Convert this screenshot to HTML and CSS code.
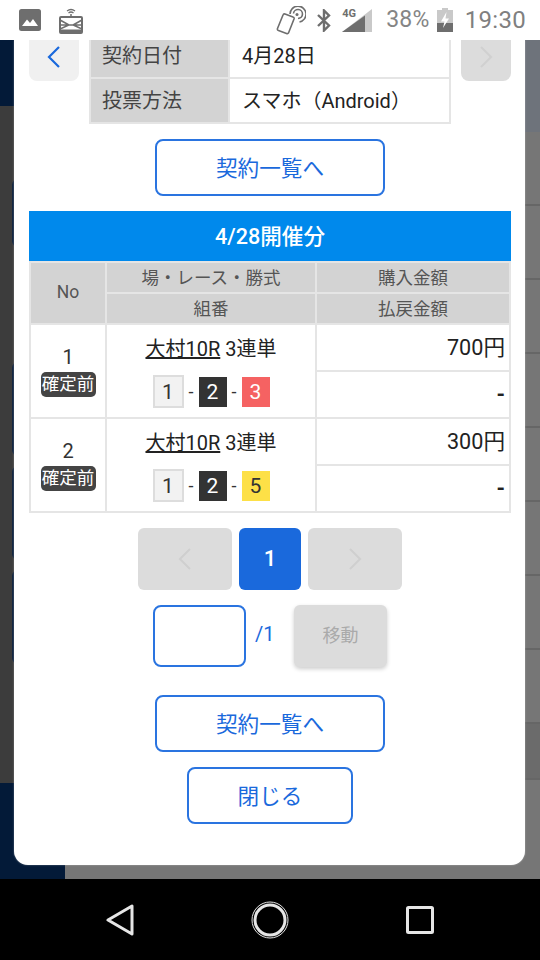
FILE: index.html
```html
<!DOCTYPE html>
<html lang="ja">
<head>
    <meta charset="UTF-8">
    <meta name="viewport" content="width=device-width, initial-scale=1.0">
    <title>投票内容</title>
    <link rel="stylesheet" href="styles.css">
</head>
<body>
    <div class="statusBar">
        <svg class="iconPicture" width="22" height="22" viewBox="0 0 22 22">
            <rect width="22" height="22" rx="2.5" fill="#6e6e6e"/>
            <path d="M3 17 L8 10.5 L11 14 L14 10 L19 17 Z" fill="#fff"/>
        </svg>
        <svg class="iconRoad" width="24" height="27" viewBox="0 0 24 27" fill="none" stroke="#6e6e6e">
            <path d="M8 4 Q12 1 16 4 M9.5 6 Q12 4 14.500 6" stroke-width="1.300"/>
            <circle cx="12" cy="8" r="1" fill="#6e6e6e" stroke="none"/>
            <rect x="1" y="10" width="22" height="16" rx="1" stroke-width="2"/>
            <path d="M1 13 L10 18 L1 22 M23 13 L14 18 L23 22 M2 18 H22" stroke-width="1.500"/>
            <path d="M1 24 H23" stroke-width="3"/>
        </svg>
        <div class="statusRight">
            <svg class="iconNfc" width="30" height="29" viewBox="0 0 30 29" fill="none" stroke="#6e6e6e" stroke-width="1.600">
                <path d="M9 8 L17 11 Q18.500 11.500 18 13 L12.500 27 Q12 28 10.500 27.500 L2.500 24.500 Q1 24 1.500 22.500 L7 9 Q7.500 7.500 9 8 Z"/>
                <path d="M14 8 A8 8 0 1 1 23.500 16"/>
                <path d="M17.500 7.500 A4.500 4.500 0 1 1 22 12.500"/>
                <circle cx="21" cy="8.500" r="1.500" fill="#6e6e6e" stroke="none"/>
            </svg>
            <svg class="iconBluetooth" width="14" height="23" viewBox="0 0 14 23" fill="none" stroke="#6e6e6e" stroke-width="2.400">
                <path d="M1 6 L12 16.500 L7 21.500 V1.500 L12 6.500 L1 17"/>
            </svg>
            <div class="signal">
                <svg width="30" height="23" viewBox="0 0 30 23">
                    <path d="M30 0 V23 H0 Z" fill="#c9c9c9"/>
                    <path d="M23 6.500 V23 H0 L23 6.500 Z" fill="#6e6e6e"/>
                </svg>
                <span class="signalLabel">4G</span>
            </div>
            <span class="battery">38%</span>
            <svg class="iconBattery" width="16" height="24" viewBox="0 0 16 24">
                <path d="M5 0 H11 V2 H16 V24 H0 V2 H5 Z" fill="#c9c9c9"/>
                <path d="M0 15 H16 V24 H0 Z" fill="#6e6e6e"/>
                <path d="M9.500 4 L4 13.500 H7.500 L6 20 L12 10.500 H8.500 Z" fill="#fff"/>
            </svg>
            <span class="clock">19:30</span>
        </div>
    </div>

    <div class="main">
        <div class="behind">
            <div class="behindLeft">
                <div class="navyBand"></div>
                <div class="darkBand">
                    <div class="behindBox boxA"></div>
                    <div class="behindBox boxB"></div>
                    <div class="behindBox boxC"></div>
                    <div class="behindBox boxD"></div>
                </div>
                <div class="navyBand bottomBand"></div>
            </div>
            <div class="behindRight">
                <div class="blueGrayBand"></div>
                <div class="listRow"></div>
                <div class="listRow"></div>
                <div class="listRow"></div>
                <div class="listRow"></div>
                <div class="listRow"></div>
                <div class="listRow"></div>
                <div class="listRow"></div>
                <div class="listRow"></div>
                <div class="listRow shortRow"></div>
            </div>
        </div>

        <div class="modal">
            <div class="contract">
                <div class="arrowBtn prevBtn">
                    <svg width="14" height="22" viewBox="0 0 14 22" fill="none" stroke="#1a69dc" stroke-width="2.200"><path d="M12 1 L2 11 L12 21"/></svg>
                </div>
                <table class="contractTable">
                    <tr><th>契約日付</th><td>4月28日</td></tr>
                    <tr><th>投票方法</th><td>スマホ（Android）</td></tr>
                </table>
                <div class="arrowBtn nextBtn">
                    <svg width="14" height="22" viewBox="0 0 14 22" fill="none" stroke="#d0d0d0" stroke-width="2"><path d="M2 1 L12 11 L2 21"/></svg>
                </div>
            </div>

            <a class="outlineBtn listBtn firstList">契約一覧へ</a>

            <div class="dayTitle">4/28開催分</div>
            <table class="betTable">
                <colgroup><col class="colNo"><col class="colRace"><col class="colAmount"></colgroup>
                <tr class="headRow">
                    <th rowspan="2">No</th>
                    <th>場・レース・勝式</th>
                    <th>購入金額</th>
                </tr>
                <tr class="headRow">
                    <th>組番</th>
                    <th>払戻金額</th>
                </tr>
                <tr class="amountRow">
                    <td rowspan="2" class="noCell">
                        <div class="betNo">1</div>
                        <span class="statusTag">確定前</span>
                    </td>
                    <td rowspan="2" class="raceCell">
                        <div class="raceName"><span class="raceLink">大村10R</span> 3連単</div>
                        <div class="combo">
                            <span class="boat boat1">1</span><span class="dash">-</span><span class="boat boat2">2</span><span class="dash">-</span><span class="boat boat3">3</span>
                        </div>
                    </td>
                    <td class="amount">700円</td>
                </tr>
                <tr class="amountRow">
                    <td class="amount refund">-</td>
                </tr>
                <tr class="amountRow">
                    <td rowspan="2" class="noCell">
                        <div class="betNo">2</div>
                        <span class="statusTag">確定前</span>
                    </td>
                    <td rowspan="2" class="raceCell">
                        <div class="raceName"><span class="raceLink">大村10R</span> 3連単</div>
                        <div class="combo">
                            <span class="boat boat1">1</span><span class="dash">-</span><span class="boat boat2">2</span><span class="dash">-</span><span class="boat boat5">5</span>
                        </div>
                    </td>
                    <td class="amount">300円</td>
                </tr>
                <tr class="amountRow">
                    <td class="amount refund">-</td>
                </tr>
            </table>

            <div class="pager">
                <div class="pageArrow">
                    <svg width="14" height="22" viewBox="0 0 14 22" fill="none" stroke="#cfcfcf" stroke-width="2"><path d="M12 1 L2 11 L12 21"/></svg>
                </div>
                <div class="pageNow">1</div>
                <div class="pageArrow">
                    <svg width="14" height="22" viewBox="0 0 14 22" fill="none" stroke="#cfcfcf" stroke-width="2"><path d="M2 1 L12 11 L2 21"/></svg>
                </div>
            </div>

            <div class="jump">
                <input class="jumpInput" type="text">
                <span class="jumpTotal">/1</span>
                <div class="jumpBtn">移動</div>
            </div>

            <a class="outlineBtn listBtn secondList">契約一覧へ</a>
            <a class="outlineBtn closeBtn">閉じる</a>
        </div>
    </div>

    <div class="navBar">
        <svg width="28" height="32" viewBox="0 0 28 32" fill="none" stroke="#e6e6e6" stroke-width="3" stroke-linejoin="round"><path d="M26 2 V30 L2 16 Z"/></svg>
        <svg width="38" height="38" viewBox="0 0 38 38" fill="none" stroke="#e6e6e6"><circle cx="19" cy="19" r="18" stroke-width="1"/><circle cx="19" cy="19" r="15" stroke-width="3"/></svg>
        <svg width="28" height="28" viewBox="0 0 28 28" fill="none" stroke="#e6e6e6" stroke-width="3" stroke-linejoin="round"><rect x="1.500" y="1.500" width="25" height="25" rx="1"/></svg>
    </div>
</body>
</html>
```

FILE: styles.css
```css
* {
    box-sizing: border-box;
}
html,body {
    height: 100%;
}
body {
    margin: 0;
    display: flex;
    flex-flow: column;
    width: 540px;
    height: 960px;
    overflow: hidden;
    font-family: "Roboto", "Noto Sans CJK JP", sans-serif;
    color: #333;
}

/* status bar */
.statusBar {
    height: 40px;
    flex: none;
    display: flex;
    align-items: center;
    padding: 0 14px 0 19px;
    background: #fff;
}
.iconRoad {
    margin-left: 18px;
    margin-top: 1px;
}
.statusRight {
    margin-left: auto;
    display: flex;
    align-items: center;
}
.iconNfc {
    margin-right: 11px;
}
.iconBluetooth {
    margin-right: 11px;
}
.signal {
    position: relative;
    width: 30px;
    height: 23px;
    margin-right: 14px;
}
.signal svg {
    display: block;
}
.signalLabel {
    position: absolute;
    left: 0;
    top: -2px;
    font: bold 11px/14px "Roboto", sans-serif;
    color: #6e6e6e;
}
.battery {
    font: 23px/24px "Roboto", sans-serif;
    color: #858585;
    letter-spacing: 0.3px;
    margin-right: 7px;
}
.iconBattery {
    margin-right: 12px;
}
.clock {
    font: 24px/24px "Roboto", sans-serif;
    color: #808080;
    letter-spacing: 0.3px;
}

/* page behind the dialog */
.main {
    flex: 1;
    position: relative;
    overflow: hidden;
}
.behind {
    height: 100%;
    display: flex;
}
.behindLeft {
    width: 65px;
    display: flex;
    flex-flow: column;
}
.navyBand {
    height: 66px;
    background: #031a38;
}
.bottomBand {
    height: 96px;
}
.darkBand {
    flex: 1;
    background: #3c3c3c;
    padding-left: 12px;
}
.behindBox {
    height: 94px;
    border: 2px solid #10233f;
    border-radius: 6px;
}
.boxA {
    margin-top: 73px;
    height: 68px;
}
.boxB {
    margin-top: 115px;
}
.boxC {
    margin-top: 10px;
}
.boxD {
    margin-top: 10px;
}
.behindRight {
    flex: 1;
    background: #767676;
}
.blueGrayBand {
    height: 92px;
    background: #6e737b;
}
.listRow {
    height: 74px;
    border-bottom: 2px solid #666;
}
.shortRow {
    background: #6b6b6b;
    height: 56px;
}

/* dialog */
.modal {
    position: absolute;
    left: 14px;
    top: 0;
    width: 511px;
    height: 825px;
    padding: 0 14px 0 15px;
    background: #fff;
    border-radius: 0 0 14px 14px;
    overflow: hidden;
    box-shadow: 0 0 2px rgba(255,255,255,0.4);
}
.contract {
    display: flex;
    align-items: flex-start;
    margin-top: -8px;
}
.arrowBtn {
    width: 50px;
    height: 49px;
    flex: none;
    display: flex;
    justify-content: center;
    align-items: center;
    border-radius: 0 0 8px 8px;
}
.prevBtn {
    background: #f0f0f0;
}
.nextBtn {
    background: #dcdcdc;
}
.contractTable {
    width: 362px;
    height: 90px;
    margin: 0 10px;
    border-collapse: collapse;
    table-layout: fixed;
    font-size: 20px;
}
.contractTable th,.contractTable td {
    height: 45px;
    border: 2px solid #e5e5e5;
    font-weight: normal;
    text-align: left;
    padding: 0 11px 2px;
}
.contractTable th {
    width: 139px;
    background: #d3d3d3;
    color: #444;
}
.contractTable td {
    padding-left: 12px;
    color: #222;
}
.outlineBtn {
    display: flex;
    justify-content: center;
    align-items: center;
    height: 57px;
    margin: 0 auto;
    padding-bottom: 3px;
    border: 2px solid #2a74e0;
    border-radius: 8px;
    font-size: 21.600px;
    color: #1a69dc;
}
.listBtn {
    width: 230px;
}
.firstList {
    margin-top: 15px;
}
.dayTitle {
    margin-top: 15px;
    height: 50px;
    padding-bottom: 4px;
    display: flex;
    justify-content: center;
    align-items: center;
    background: #0089ec;
    color: #fff;
    font-size: 21.600px;
    font-weight: 500;
}

/* bets */
.betTable {
    width: 482px;
    border-collapse: collapse;
    table-layout: fixed;
    border: 2px solid #e5e5e5;
}
.colNo {
    width: 76px;
}
.colRace {
    width: 210px;
}
.betTable th,.betTable td {
    border: 2px solid #e5e5e5;
    padding: 0;
}
.betTable th {
    height: 31px;
    padding-bottom: 3px;
    background: #d3d3d3;
    font-size: 17.500px;
    font-weight: normal;
    color: #555;
}
.amountRow td {
    height: 47px;
}
.noCell {
    text-align: center;
    vertical-align: middle;
}
.betNo {
    font-size: 20px;
    line-height: 24px;
    margin-bottom: 3px;
}
.statusTag {
    display: inline-block;
    width: 55px;
    height: 25px;
    line-height: 24px;
    border-radius: 5px;
    background: #444;
    color: #fff;
    font-size: 17.500px;
    vertical-align: top;
}
.raceCell {
    text-align: center;
    vertical-align: top;
}
.raceName {
    font-size: 20px;
    line-height: 28px;
    margin-top: 10px;
    color: #222;
}
.raceLink {
    text-decoration: underline;
}
.combo {
    display: flex;
    justify-content: center;
    align-items: center;
    margin-top: 12px;
}
.boat {
    width: 28px;
    height: 30px;
    display: flex;
    justify-content: center;
    align-items: center;
    font-size: 21px;
}
.boat1 {
    width: 31px;
    height: 33px;
    background: #f2f2f2;
    border: 2px solid #ddd;
}
.boat2 {
    background: #333;
    color: #fff;
}
.boat3 {
    background: #f56262;
    color: #fff;
}
.boat5 {
    background: #fde047;
}
.dash {
    width: 15px;
    text-align: center;
    font-size: 18px;
}
.amount {
    text-align: right;
    font-size: 21.600px;
    color: #222;
}
.betTable td.amount {
    padding: 0 4px 4px 0;
}
.betTable td.refund {
    padding-bottom: 0;
    font-weight: bold;
}

/* pager */
.pager {
    display: flex;
    justify-content: center;
    gap: 7px;
    margin-top: 15px;
}
.pageArrow,.pageNow {
    height: 62px;
    display: flex;
    justify-content: center;
    align-items: center;
    border-radius: 6px;
}
.pageArrow {
    width: 94px;
    background: #dcdcdc;
}
.pageNow {
    width: 62px;
    padding-bottom: 2px;
    background: #1a69dc;
    color: #fff;
    font-size: 22px;
    font-weight: 500;
}
.jump {
    display: flex;
    align-items: center;
    margin-top: 15px;
    padding-left: 124px;
}
.jumpInput {
    width: 93px;
    height: 62px;
    border: 2px solid #2a74e0;
    border-radius: 8px;
    background: #fff;
}
.jumpTotal {
    width: 48px;
    padding: 0 0 4px 9px;
    font-size: 20px;
    color: #1a69dc;
}
.jumpBtn {
    width: 93px;
    height: 62px;
    padding-bottom: 4px;
    display: flex;
    justify-content: center;
    align-items: center;
    border-radius: 6px;
    background: #dcdcdc;
    color: #aaa;
    font-size: 18px;
    box-shadow: 0 2px 4px rgba(0,0,0,0.2);
}
.secondList {
    margin-top: 28px;
}
.closeBtn {
    width: 166px;
    margin-top: 15px;
}

/* nav bar */
.navBar {
    height: 81px;
    flex: none;
    background: #000;
    display: grid;
    grid-template-columns: 150px 150px 150px;
    justify-content: center;
    justify-items: center;
    align-items: center;
}
```
